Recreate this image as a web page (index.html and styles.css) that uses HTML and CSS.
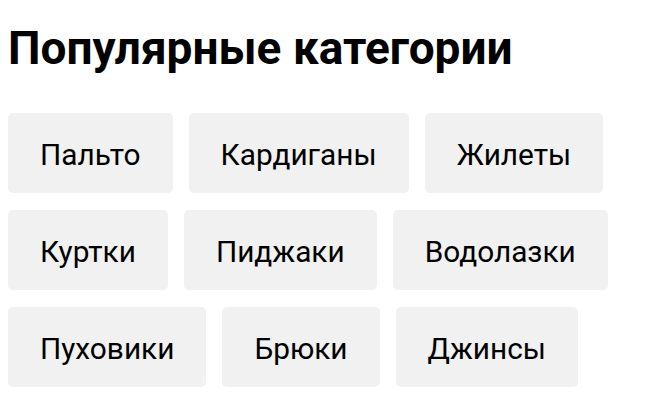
FILE: index.html
```html
<!DOCTYPE html>
<html lang="ru">
<head>
  <meta charset="UTF-8">
  <meta name="viewport" content="width=device-width, initial-scale=1.0">
  <title>Популярные категории</title>
  <link rel="stylesheet" href="styles.css">
</head>
<body>

  <div class="categories">
    <h1>Популярные категории</h1>

    <!-- Список категорий -->
    <div class="tags">
      <a class="tag" href="#">Пальто</a>
      <a class="tag" href="#">Кардиганы</a>
      <a class="tag" href="#">Жилеты</a>
      <a class="tag" href="#">Куртки</a>
      <a class="tag" href="#">Пиджаки</a>
      <a class="tag" href="#">Водолазки</a>
      <a class="tag" href="#">Пуховики</a>
      <a class="tag" href="#">Брюки</a>
      <a class="tag" href="#">Джинсы</a>
    </div>
  </div>

</body>
</html>
```

FILE: styles.css
```css
body {
  font-family: Roboto, "Liberation Sans", Arial, sans-serif;
  margin: 8px;
  background-color: #ffffff;
  color: #000000;
}

h1 {
  font-size: 46px;
  font-weight: bold;
  margin: 13px 0 0 0;
  line-height: 54px;
}

.tags {
  display: flex;
  flex-wrap: wrap;
  gap: 17px 16px;
  width: 620px;
  margin-top: 38px;
}

.tag {
  display: block;
  height: 34px;
  line-height: 34px;
  padding: 25px 32px 21px;
  font-size: 29.8px;
  color: #000000;
  text-decoration: none;
  background-color: #f1f1f1;
  border-radius: 5px;
}
```
